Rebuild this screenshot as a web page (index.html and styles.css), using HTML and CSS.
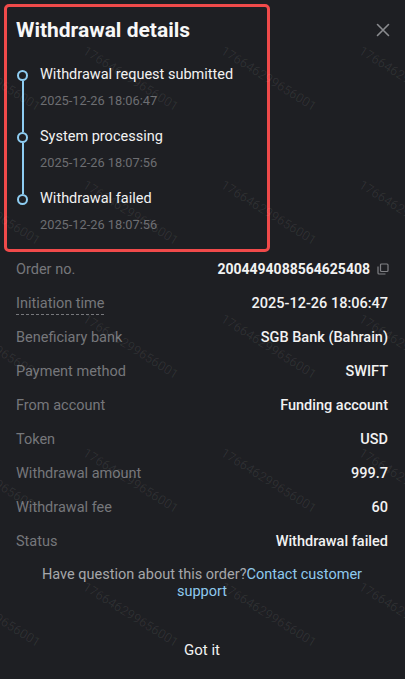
FILE: index.html
```html
<!DOCTYPE html>
<html lang="en">
<head>
<meta charset="utf-8">
<title>Withdrawal details</title>
<link rel="stylesheet" href="styles.css">
</head>
<body>
<div class="sheet">
  <header class="head">
    <h1 class="title">Withdrawal details</h1>
    <button class="close" aria-label="Close">
      <svg width="14" height="14" viewBox="0 0 14 14"><path d="M1.5 1.5 L12.5 12.5 M12.5 1.5 L1.5 12.5" stroke="#8a8b8f" stroke-width="1.6" stroke-linecap="round" fill="none"/></svg>
    </button>
  </header>

  <ol class="timeline">
    <li class="step">
      <div class="rail"><span class="seg seg-top hidden"></span><span class="dot"></span><span class="seg seg-bottom"></span></div>
      <div class="step-body">
        <div class="step-title">Withdrawal request submitted</div>
        <div class="step-time">2025-12-26 18:06:47</div>
      </div>
    </li>
    <li class="step">
      <div class="rail"><span class="seg seg-top"></span><span class="dot"></span><span class="seg seg-bottom"></span></div>
      <div class="step-body">
        <div class="step-title">System processing</div>
        <div class="step-time">2025-12-26 18:07:56</div>
      </div>
    </li>
    <li class="step">
      <div class="rail"><span class="seg seg-top"></span><span class="dot"></span><span class="seg seg-bottom hidden"></span></div>
      <div class="step-body">
        <div class="step-title">Withdrawal failed</div>
        <div class="step-time">2025-12-26 18:07:56</div>
      </div>
    </li>
  </ol>

  <dl class="rows">
    <div class="row"><dt>Order no.</dt><dd class="strong">2004494088564625408
      <svg class="copy" width="12" height="12" viewBox="0 0 12 12"><rect x="3.5" y="1" width="7.5" height="7.5" rx="1" fill="none" stroke="#808185" stroke-width="1.2"/><path d="M1 3.5 V10 a1 1 0 0 0 1 1 H8.5" fill="none" stroke="#808185" stroke-width="1.2"/></svg></dd></div>
    <div class="row"><dt><span class="dashed">Initiation time</span></dt><dd>2025-12-26 18:06:47</dd></div>
    <div class="row"><dt>Beneficiary bank</dt><dd>SGB Bank (Bahrain)</dd></div>
    <div class="row"><dt>Payment method</dt><dd>SWIFT</dd></div>
    <div class="row"><dt>From account</dt><dd>Funding account</dd></div>
    <div class="row"><dt>Token</dt><dd>USD</dd></div>
    <div class="row"><dt>Withdrawal amount</dt><dd>999.7</dd></div>
    <div class="row"><dt>Withdrawal fee</dt><dd>60</dd></div>
    <div class="row"><dt>Status</dt><dd>Withdrawal failed</dd></div>
  </dl>

  <p class="help">Have question about this order?<a class="link" href="#">Contact customer support</a></p>

  <button class="got">Got it</button>

  <div class="highlight"></div>

  <div class="watermark" aria-hidden="true">
    <span>176646299656001</span><span>176646299656001</span><span>176646299656001</span><span>176646299656001</span>
    <span>176646299656001</span><span>176646299656001</span><span>176646299656001</span><span>176646299656001</span>
    <span>176646299656001</span><span>176646299656001</span><span>176646299656001</span><span>176646299656001</span>
    <span>176646299656001</span><span>176646299656001</span><span>176646299656001</span><span>176646299656001</span>
    <span>176646299656001</span><span>176646299656001</span><span>176646299656001</span><span>176646299656001</span>
  </div>
</div>
</body>
</html>
```

FILE: styles.css
```css
* { box-sizing: border-box; }

html, body {
  margin: 0;
  padding: 0;
  background: #1e1f23;
}

body {
  font-family: Roboto, "Noto Sans", "Liberation Sans", sans-serif;
  color: #f2f2f2;
  width: 405px;
  height: 679px;
  overflow: hidden;
}

.sheet {
  position: relative;
  height: 679px;
  padding: 18px 17px 0 16px;
  display: flex;
  flex-direction: column;
  overflow: hidden;
}

.head {
  display: flex;
  align-items: center;
  justify-content: space-between;
  height: 24px;
}

.title {
  margin: 0;
  font-size: 21px;
  font-weight: 700;
  line-height: 24px;
  color: #f7f7f7;
}

.close {
  background: none;
  border: 0;
  padding: 0;
  margin-right: -2px;
  width: 14px;
  height: 14px;
  display: flex;
}

.timeline {
  list-style: none;
  margin: 23px 0 0 0;
  padding: 0 0 0 1px;
}

.step {
  display: flex;
  gap: 12px;
}

.rail {
  width: 11px;
  display: flex;
  flex-direction: column;
  align-items: center;
}

.seg {
  width: 2px;
  background: #8ecdf2;
}

.seg-top { height: 5px; }
.seg-bottom { flex: 1; }
.hidden { background: transparent; }

.dot {
  width: 11px;
  height: 11px;
  border-radius: 50%;
  border: 2.5px solid #8ecdf2;
  background: #1e1f23;
  flex: none;
}

.step-body {
  padding-bottom: 17px;
}

.step-title {
  font-size: 14.5px;
  line-height: 20px;
  color: #f2f2f2;
}

.step-time {
  font-size: 12.8px;
  line-height: 18px;
  margin-top: 7px;
  color: #6d6e72;
}

.rows {
  margin: 1px 0 0 0;
}

.row {
  display: flex;
  justify-content: space-between;
  align-items: center;
  height: 34px;
}

.row dt {
  font-size: 14.5px;
  color: #76777b;
}

.row dd {
  margin: 0;
  font-size: 14.5px;
  font-weight: 500;
  color: #f2f2f2;
  display: flex;
  align-items: center;
  gap: 7px;
}

.row dd.strong {
  font-weight: 700;
  font-size: 14px;
  margin-right: -1px;
}

.copy { flex: none; }

.dashed {
  border-bottom: 1px dashed #76777b;
  padding-bottom: 2px;
}

.help {
  margin: 8px 0 0 0;
  padding: 0 14px;
  text-align: center;
  font-size: 14.5px;
  line-height: 17px;
  color: #a6a7aa;
}

.link {
  color: #8ec9ee;
  text-decoration: none;
}

.got {
  margin: 28px auto 0 auto;
  height: 44px;
  width: 120px;
  background: none;
  border: 0;
  font-family: inherit;
  font-size: 15px;
  color: #f2f2f2;
}

.highlight {
  position: absolute;
  left: 4px;
  top: 4px;
  width: 266px;
  height: 248px;
  border: 3px solid #f04a4a;
  border-radius: 5px;
  pointer-events: none;
}

.watermark {
  position: absolute;
  left: -76px;
  top: 11px;
  width: 552px;
  display: grid;
  grid-template-columns: repeat(4, 138px);
  grid-auto-rows: 134px;
  pointer-events: none;
}

.watermark span {
  display: flex;
  align-items: center;
  justify-content: center;
  transform: rotate(32deg);
  font-size: 13px;
  color: rgba(255, 255, 255, 0.07);
  white-space: nowrap;
}
```
